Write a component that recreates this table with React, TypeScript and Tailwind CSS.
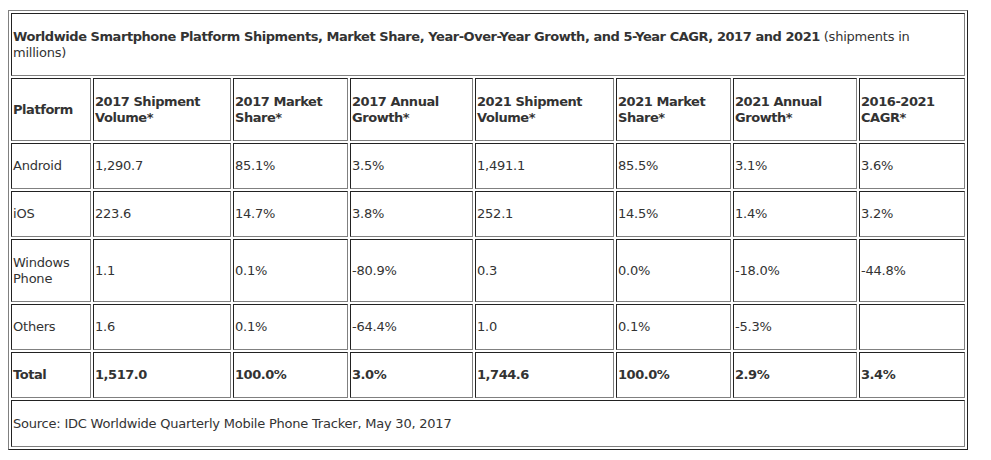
const headers = [
  { label: "Platform", w: "w-[80px]" },
  { label: "2017 Shipment Volume*", w: "w-[138px]" },
  { label: "2017 Market Share*", w: "w-[115px]" },
  { label: "2017 Annual Growth*", w: "w-[123px]" },
  { label: "2021 Shipment Volume*", w: "w-[139px]" },
  { label: "2021 Market Share*", w: "w-[115px]" },
  { label: "2021 Annual Growth*", w: "w-[124px]" },
  { label: "2016-2021 CAGR*", w: "w-[106px]" },
];

const rows = [
  { cells: ["Android", "1,290.7", "85.1%", "3.5%", "1,491.1", "85.5%", "3.1%", "3.6%"], h: "h-[46px]" },
  { cells: ["iOS", "223.6", "14.7%", "3.8%", "252.1", "14.5%", "1.4%", "3.2%"], h: "h-[46px]" },
  { cells: ["Windows Phone", "1.1", "0.1%", "-80.9%", "0.3", "0.0%", "-18.0%", "-44.8%"], h: "h-[63px]" },
  { cells: ["Others", "1.6", "0.1%", "-64.4%", "1.0", "0.1%", "-5.3%", ""], h: "h-[46px]" },
];

const totals = ["Total", "1,517.0", "100.0%", "3.0%", "1,744.6", "100.0%", "2.9%", "3.4%"];

const cell =
  "border border-t-[#222] border-l-[#222] border-b-[#808080] border-r-[#808080] px-px py-0 align-middle text-left";

// DejaVu runs a little wider than Verdana, so tighten it
const bold = "font-bold tracking-[-0.45px]";

export default function App() {
  return (
    <div className="bg-white pl-2 pt-[10px] pb-2 text-[13px] leading-[16px] tracking-[-0.22px] text-[#333] font-['DejaVu_Sans',Verdana,sans-serif]">
      <table className="w-[960px] border-separate border-spacing-[2px] border border-t-[#808080] border-l-[#808080] border-b-[#222] border-r-[#222]">
        <tbody>
          <tr>
            <td colSpan={8} className={`${cell} h-[63px]`}>
              <b className={bold}>
                Worldwide Smartphone Platform Shipments, Market Share, Year-Over-Year Growth, and 5-Year CAGR, 2017 and 2021
              </b>{" "}
              (shipments in millions)
            </td>
          </tr>
          <tr>
            {headers.map((h) => (
              <td key={h.label} className={`${cell} ${h.w} h-[63px] ${bold}`}>
                {h.label}
              </td>
            ))}
          </tr>
          {rows.map((r) => (
            <tr key={r.cells[0]}>
              {r.cells.map((c, i) => (
                <td key={i} className={`${cell} ${r.h}`}>
                  {c}
                </td>
              ))}
            </tr>
          ))}
          <tr>
            {totals.map((c, i) => (
              <td key={i} className={`${cell} h-[46px] ${bold}`}>
                {c}
              </td>
            ))}
          </tr>
          <tr>
            <td colSpan={8} className={`${cell} h-[47px]`}>
              Source: IDC Worldwide Quarterly Mobile Phone Tracker, May 30, 2017
            </td>
          </tr>
        </tbody>
      </table>
    </div>
  );
}
